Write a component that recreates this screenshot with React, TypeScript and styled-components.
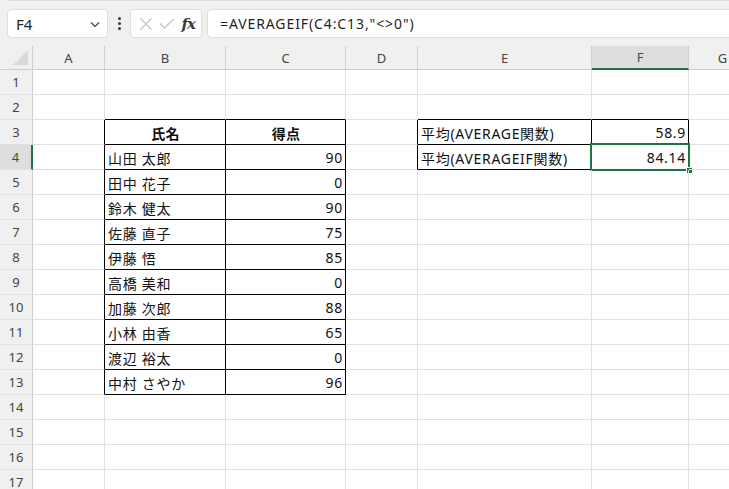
import React from 'react'
import styled, {createGlobalStyle, css} from 'styled-components'

const GlobalStyle = createGlobalStyle`
  html, body {
    margin: 0;
    padding: 0;
    background: #ffffff;
    overflow: hidden;
  }
`

const cellFont = `"Noto Sans", "Noto Sans CJK JP", sans-serif`
const uiFont = `"Noto Sans", "Open Sans", sans-serif`

const green = '#217346'
const gridLine = '#e1e1e1'
const headerLine = '#cfcfcf'

const Page = styled.div`
  width: 729px;
  height: 489px;
  overflow: hidden;
  background: #f0f0f0;
  display: flex;
  flex-direction: column;
`

const RibbonEdge = styled.div`
  height: 2px;
  margin-left: 8px;
  background: #ffffff;
  border-left: 1px solid #dcdcdc;
  border-bottom: 1px solid #dcdcdc;
  border-bottom-left-radius: 6px;
`

const FormulaBar = styled.div`
  display: flex;
  align-items: center;
  height: 29px;
  margin-top: 8px;
  margin-bottom: 8px;
  padding-left: 7px;
`

const boxBase = css`
  box-sizing: border-box;
  height: 29px;
  background: #ffffff;
  border: 1px solid #dddddd;
  border-radius: 4px;
  display: flex;
  align-items: center;
`

const NameBox = styled.div`
  ${boxBase};
  width: 101px;
  padding: 0 6px 0 8px;
  justify-content: space-between;
  font-family: ${uiFont};
  font-size: 15px;
  color: #262626;
`

const Kebab = styled.div`
  width: 22px;
  display: flex;
  flex-direction: column;
  align-items: center;
  gap: 2px;

  span {
    width: 3px;
    height: 3px;
    border-radius: 50%;
    background: #3a3a3a;
  }
`

const FxBox = styled.div`
  ${boxBase};
  width: 72px;
  padding: 0 6px 0 8px;
  justify-content: space-between;
`

const FxLabel = styled.span`
  font-family: "DejaVu Serif", "Liberation Serif", serif;
  font-style: italic;
  font-size: 15px;
  font-weight: bold;
  color: #3b3b3b;
  letter-spacing: -1px;
`

const FormulaInput = styled.div`
  ${boxBase};
  flex: 1;
  margin-left: 5px;
  margin-right: -10px;
  padding-left: 12px;
  font-family: ${cellFont};
  font-size: 14px;
  letter-spacing: 0.9px;
  color: #1f1f1f;
`

const Sheet = styled.div`
  flex: 1;
  display: grid;
  grid-template-columns: 33px 72px 121px 120px 72px 174px 97px 68px;
  grid-template-rows: 24px;
  grid-auto-rows: 25px;
  background: #ffffff;
`

const Corner = styled.div`
  box-sizing: border-box;
  background: #f0f0f0;
  border-right: 1px solid ${headerLine};
  border-bottom: 1px solid ${headerLine};
  position: relative;

  &::after {
    content: '';
    position: absolute;
    right: 4px;
    bottom: 4px;
    width: 0;
    height: 0;
    border-left: 15px solid transparent;
    border-bottom: 15px solid #d9d9d9;
  }
`

const ColHeader = styled.div<{$selected?: boolean}>`
  box-sizing: border-box;
  display: flex;
  align-items: center;
  justify-content: center;
  font-family: ${uiFont};
  font-size: 13px;
  background: ${p => (p.$selected ? '#dedede' : '#f0f0f0')};
  color: ${p => (p.$selected ? '#1d5c36' : '#444444')};
  border-right: 1px solid ${headerLine};
  border-bottom: ${p => (p.$selected ? `2px solid ${green}` : `1px solid ${headerLine}`)};
`

const RowHeader = styled.div<{$selected?: boolean}>`
  box-sizing: border-box;
  display: flex;
  align-items: center;
  justify-content: center;
  font-family: ${uiFont};
  font-size: 13px;
  background: ${p => (p.$selected ? '#dedede' : '#f0f0f0')};
  color: ${p => (p.$selected ? '#1d5c36' : '#444444')};
  border-bottom: 1px solid ${gridLine};
  border-right: ${p => (p.$selected ? `2px solid ${green}` : `1px solid ${headerLine}`)};
`

const Cell = styled.div<{$right: boolean; $bottom: boolean; $align: 'left' | 'right' | 'center'; $bold?: boolean}>`
  box-sizing: border-box;
  position: relative;
  display: flex;
  align-items: center;
  justify-content: ${p => (p.$align === 'right' ? 'flex-end' : p.$align === 'center' ? 'center' : 'flex-start')};
  padding: 1px 2px 0 3px;
  white-space: nowrap;
  font-family: ${cellFont};
  font-size: 14px;
  letter-spacing: ${p => (p.$align === 'center' ? '0.3px' : '0.7px')};
  font-weight: ${p => (p.$bold ? 700 : 400)};
  color: #111111;
  border-right: 1px solid ${p => (p.$right ? '#000000' : gridLine)};
  border-bottom: 1px solid ${p => (p.$bottom ? '#000000' : gridLine)};
`

const Selection = styled.div`
  position: absolute;
  left: -2px;
  top: -2px;
  right: -2px;
  bottom: -2px;
  border: 2px solid ${green};
  pointer-events: none;

  &::after {
    content: '';
    position: absolute;
    right: -5px;
    bottom: -5px;
    width: 5px;
    height: 5px;
    background: ${green};
    border: 1px solid #ffffff;
  }
`

const columns = ['A', 'B', 'C', 'D', 'E', 'F', 'G']
const ROWS = 17

type CellData = {text: string; align: 'left' | 'right' | 'center'; bold?: boolean}

const people: [string, number][] = [
  ['山田 太郎', 90],
  ['田中 花子', 0],
  ['鈴木 健太', 90],
  ['佐藤 直子', 75],
  ['伊藤 悟', 85],
  ['高橋 美和', 0],
  ['加藤 次郎', 88],
  ['小林 由香', 65],
  ['渡辺 裕太', 0],
  ['中村 さやか', 96],
]

const data: Record<string, CellData> = {
  '3-1': {text: '氏名', align: 'center', bold: true},
  '3-2': {text: '得点', align: 'center', bold: true},
  '3-4': {text: '平均(AVERAGE関数)', align: 'left'},
  '3-5': {text: '58.9', align: 'right'},
  '4-4': {text: '平均(AVERAGEIF関数)', align: 'left'},
  '4-5': {text: '84.14', align: 'right'},
}
people.forEach(([name, score], i) => {
  data[`${i + 4}-1`] = {text: name, align: 'left'}
  data[`${i + 4}-2`] = {text: String(score), align: 'right'}
})

const boxes = [
  {r1: 3, r2: 13, c1: 1, c2: 2},
  {r1: 3, r2: 4, c1: 4, c2: 5},
]

const boxed = (r: number, c: number) => boxes.some(b => r >= b.r1 && r <= b.r2 && c >= b.c1 && c <= b.c2)

const selRow = 4
const selCol = 5

export default function App() {
  const rows = Array.from({length: ROWS}, (_, i) => i + 1)

  return (
    <>
      <GlobalStyle />
      <Page>
        <RibbonEdge />
        <FormulaBar>
          <NameBox>
            <span>F4</span>
            <svg width="12" height="12" viewBox="0 0 12 12">
              <path d="M2 4.5 L6 8.5 L10 4.5" fill="none" stroke="#444" strokeWidth="1.2" />
            </svg>
          </NameBox>
          <Kebab>
            <span />
            <span />
            <span />
          </Kebab>
          <FxBox>
            <svg width="14" height="14" viewBox="0 0 14 14">
              <path d="M1.5 1.5 L12.5 12.5 M12.5 1.5 L1.5 12.5" stroke="#c4c4c4" strokeWidth="1.3" fill="none" />
            </svg>
            <svg width="16" height="14" viewBox="0 0 16 14">
              <path d="M1 6.5 L5.5 11 L15 2" stroke="#c4c4c4" strokeWidth="1.3" fill="none" />
            </svg>
            <FxLabel>fx</FxLabel>
          </FxBox>
          <FormulaInput>=AVERAGEIF(C4:C13,"&lt;&gt;0")</FormulaInput>
        </FormulaBar>
        <Sheet>
          <Corner />
          {columns.map((col, c) => (
            <ColHeader key={col} $selected={c === selCol}>
              {col}
            </ColHeader>
          ))}
          {rows.map(r => (
            <React.Fragment key={r}>
              <RowHeader $selected={r === selRow}>{r}</RowHeader>
              {columns.map((col, c) => {
                const d = data[`${r}-${c}`]
                return (
                  <Cell
                    key={col}
                    $right={boxed(r, c) || boxed(r, c + 1)}
                    $bottom={boxed(r, c) || boxed(r + 1, c)}
                    $align={d ? d.align : 'left'}
                    $bold={d?.bold}
                  >
                    {d?.text}
                    {r === selRow && c === selCol && <Selection />}
                  </Cell>
                )
              })}
            </React.Fragment>
          ))}
        </Sheet>
      </Page>
    </>
  )
}
